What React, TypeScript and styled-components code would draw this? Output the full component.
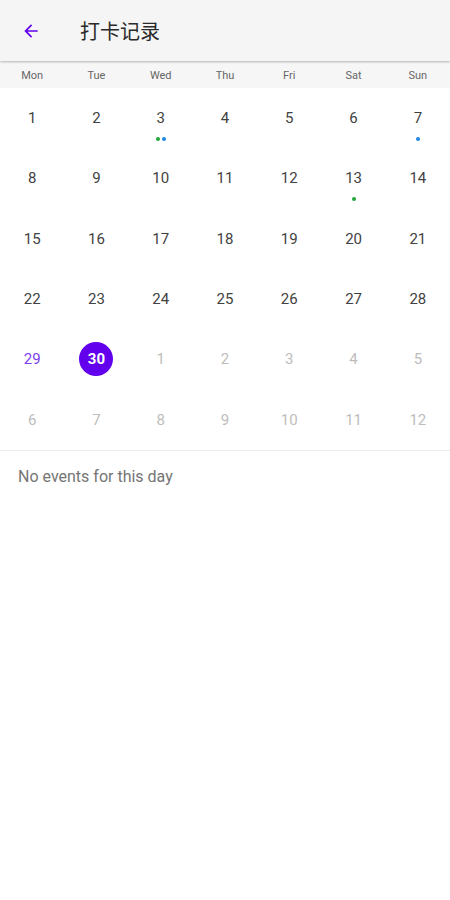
import * as React from "react";
import styled, { createGlobalStyle } from "styled-components";

const GlobalStyle = createGlobalStyle`
  html, body {
    margin: 0;
    padding: 0;
    background: #ffffff;
    font-family: Roboto, "Noto Sans CJK SC", sans-serif;
  }
`;

type DayKind = "normal" | "today" | "selected" | "outside";

interface Day {
  label: number;
  kind: DayKind;
  dots?: string[];
}

const GREEN = "#1fa83a";
const BLUE = "#1e88e5";

const weekdays = ["Mon", "Tue", "Wed", "Thu", "Fri", "Sat", "Sun"];

const buildDays = (): Day[] => {
  const days: Day[] = [];
  for (let i = 1; i <= 30; i++) {
    let kind: DayKind = "normal";
    if (i === 29) kind = "today";
    if (i === 30) kind = "selected";
    let dots: string[] | undefined;
    if (i === 3) dots = [GREEN, BLUE];
    if (i === 7) dots = [BLUE];
    if (i === 13) dots = [GREEN];
    days.push({ label: i, kind, dots });
  }
  for (let i = 1; i <= 12; i++) days.push({ label: i, kind: "outside" });
  return days;
};

export default function App() {
  const days = buildDays();
  return (
    <Page>
      <GlobalStyle />
      <Toolbar>
        <BackButton>
          <svg width="20" height="20" viewBox="0 0 24 24">
            <path
              d="M20 11H7.83l5.59-5.59L12 4l-8 8 8 8 1.41-1.41L7.83 13H20v-2z"
              fill="#6200ee"
            />
          </svg>
        </BackButton>
        <Title>打卡记录</Title>
      </Toolbar>
      <WeekRow>
        {weekdays.map((w) => (
          <WeekDay key={w}>{w}</WeekDay>
        ))}
      </WeekRow>
      <MonthGrid>
        {days.map((d, idx) => (
          <Cell key={idx}>
            <DayNumber kind={d.kind}>{d.label}</DayNumber>
            <Dots>
              {d.dots?.map((c, i) => (
                <Dot key={i} color={c} />
              ))}
            </Dots>
          </Cell>
        ))}
      </MonthGrid>
      <EventList>
        <Empty>No events for this day</Empty>
      </EventList>
    </Page>
  );
}

const Page = styled.div`
  width: 450px;
  min-height: 900px;
  background: #ffffff;
`;

const Toolbar = styled.div`
  height: 61px;
  background: #f5f5f5;
  display: flex;
  align-items: center;
  box-shadow: 0 1px 2px rgba(0, 0, 0, 0.3);
  position: relative;
  z-index: 1;
`;

const BackButton = styled.div`
  width: 62px;
  display: flex;
  justify-content: center;
  align-items: center;
  svg {
    display: block;
  }
`;

const Title = styled.div`
  margin-left: 18px;
  font-size: 20px;
  font-weight: 400;
  color: #2a2a2a;
  font-family: "Noto Sans CJK SC", sans-serif;
`;

const WeekRow = styled.div`
  display: grid;
  grid-template-columns: repeat(7, 1fr);
  height: 26px;
  margin-top: 1px;
  background: #f6f6f6;
  align-items: center;
`;

const WeekDay = styled.div`
  text-align: center;
  font-size: 11px;
  color: #666666;
`;

const MonthGrid = styled.div`
  display: grid;
  grid-template-columns: repeat(7, 1fr);
  grid-auto-rows: 60.3px;
  border-bottom: 1px solid #ededed;
`;

const Cell = styled.div`
  display: flex;
  flex-direction: column;
  align-items: center;
  justify-content: center;
  position: relative;
`;

const DayNumber = styled.div<{ kind: DayKind }>`
  width: 34px;
  height: 34px;
  border-radius: 50%;
  display: flex;
  align-items: center;
  justify-content: center;
  font-size: 15px;
  font-weight: ${(p) => (p.kind === "selected" ? 700 : 400)};
  background: ${(p) => (p.kind === "selected" ? "#6200ee" : "transparent")};
  color: ${(p) =>
    p.kind === "selected"
      ? "#ffffff"
      : p.kind === "today"
      ? "#7c3cf0"
      : p.kind === "outside"
      ? "#bdbdbd"
      : "#424242"};
`;

const Dots = styled.div`
  position: absolute;
  top: 49px;
  left: 0;
  right: 0;
  display: flex;
  justify-content: center;
  gap: 2px;
`;

const Dot = styled.span<{ color: string }>`
  width: 4px;
  height: 4px;
  border-radius: 50%;
  background: ${(p) => p.color};
`;

const EventList = styled.div`
  padding: 16px 18px;
`;

const Empty = styled.div`
  font-size: 16px;
  color: #757575;
`;
